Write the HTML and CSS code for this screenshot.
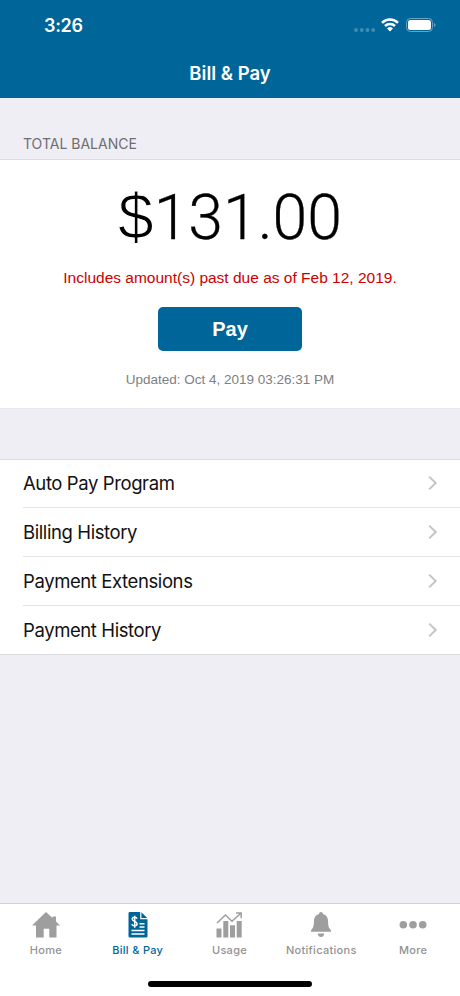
FILE: index.html
```
<!DOCTYPE html>
<html lang="en">
<head>
  <meta charset="UTF-8">
  <title>Bill &amp; Pay</title>
  <meta name="viewport" content="width=device-width,initial-scale=1">
  <link rel="stylesheet" href="styles.css">
</head>
<body>
<header class="top">
  <div class="status">
    <span class="time">3:26</span>
    <div class="status-icons">
      <svg class="signal" width="22" height="4" viewBox="0 0 22 4"><circle cx="2" cy="2" r="1.9"/><circle cx="7.8" cy="2" r="1.9"/><circle cx="13.5" cy="2" r="1.9"/><circle cx="19.2" cy="2" r="1.9"/></svg>
      <svg class="wifi" width="18" height="14" viewBox="0 0 18 14">
        <path d="M1 4.8a11.4 11.4 0 0 1 16 0M4 8a7.2 7.2 0 0 1 10 0" fill="none" stroke="#fff" stroke-width="2.5"/>
        <path d="M9 13.4 6 10.5a4.3 4.3 0 0 1 6 0z" fill="#fff"/>
      </svg>
      <svg class="battery" width="30" height="14" viewBox="0 0 30 14">
        <rect x=".5" y=".5" width="26" height="13" rx="4" fill="none" stroke="#67a4c5"/>
        <rect x="2" y="2" width="23" height="10" rx="2.5" fill="#fff"/>
        <path d="M28 5q1.6.6 1.6 2T28 9z" fill="#67a4c5"/>
      </svg>
    </div>
  </div>
  <h1>Bill &amp; Pay</h1>
</header>

<main>
  <h2>TOTAL BALANCE</h2>
  <section class="balance">
    <div class="amount"><span class="currency">$</span>131.00</div>
    <p class="due">Includes amount(s) past due as of Feb 12, 2019.</p>
    <button class="pay">Pay</button>
    <p class="updated">Updated: Oct 4, 2019 03:26:31 PM</p>
  </section>

  <ul class="menu">
    <li><span>Auto Pay Program</span><svg width="10" height="16" viewBox="0 0 10 16"><path d="m1.2 1.6 6.5 6.4-6.5 6.4"/></svg></li>
    <li><span>Billing History</span><svg width="10" height="16" viewBox="0 0 10 16"><path d="m1.2 1.6 6.5 6.4-6.5 6.4"/></svg></li>
    <li><span>Payment Extensions</span><svg width="10" height="16" viewBox="0 0 10 16"><path d="m1.2 1.6 6.5 6.4-6.5 6.4"/></svg></li>
    <li><span>Payment History</span><svg width="10" height="16" viewBox="0 0 10 16"><path d="m1.2 1.6 6.5 6.4-6.5 6.4"/></svg></li>
  </ul>
</main>

<footer>
  <nav class="tabs">
    <a class="tab">
      <svg width="28" height="26" viewBox="0 0 28 26"><path d="M14 0 20.500 6V4.500H24v5l4 4.100h-3.500V25.500h-7.200v-8.800h-5.600v8.800H4V13.600H0z"/></svg>
      <span>Home</span>
    </a>
    <a class="tab active">
      <svg width="20" height="26" viewBox="0 0 20 26">
        <path d="M1.8 0h10.4v7.3h7.3v16.9q0 1.3-1.3 1.3H1.8Q.5 25.5.5 24.2V1.3Q.5 0 1.8 0zM13.4.2l5.9 5.9h-5.9z"/>
        <path class="cut" d="M9 6.6C8.2 4.8 4.3 4.8 4.3 7.2c0 2.5 4.8 1.7 4.8 4.6 0 2.7-4.5 2.6-5.3.5M6.7 3.700v12M11.500 11.800h5M11.500 15h5M3.500 18.500h13M3.500 22h13"/>
      </svg>
      <span>Bill &amp; Pay</span>
    </a>
    <a class="tab">
      <svg width="28" height="26" viewBox="0 0 28 26">
        <path d="M1.500 16.500h5v9h-5zM8.300 9h5v16.500h-5zM15 13.300h5v12.200h-5zM21.700 9h5v16.500h-5z"/>
        <path class="trend" d="m2 11 8.400-8 6.600 6.200 8.800-8M21 1h5.200v5.200"/>
      </svg>
      <span>Usage</span>
    </a>
    <a class="tab">
      <svg width="22" height="26" viewBox="0 0 22 26"><path d="M11 0c1.200 0 1.900.8 1.900 1.900 3.400.9 5.200 3.600 5.200 7.200 0 5.300.7 7 2.800 9.100.6.7.2 1.600-.8 1.600H1.900c-1 0-1.400-.9-.8-1.600 2.100-2.100 2.800-3.800 2.800-9.100 0-3.600 1.800-6.300 5.200-7.200C9.100.8 9.800 0 11 0zM7.800 21.500h6.400Q13.700 25 11 25T7.800 21.500z"/></svg>
      <span>Notifications</span>
    </a>
    <a class="tab">
      <svg width="28" height="26" viewBox="0 0 28 26"><circle cx="4.300" cy="12.700" r="3.800"/><circle cx="14" cy="12.700" r="3.800"/><circle cx="23.700" cy="12.700" r="3.800"/></svg>
      <span>More</span>
    </a>
  </nav>
  <div class="home-bar"></div>
</footer>
</body>
</html>
```
FILE: styles.css
```
:root {
  --blue: #006699;
  --bg: #efeef4;
  --line: #dcdce0;
  --gray: #9e9e9e;
  --sans: Inter, Roboto, sans-serif;
  --helv: "Liberation Sans", Arial, sans-serif;
}
* {
  box-sizing: border-box;
}
body {
  display: flex;
  flex-direction: column;
  height: 996px;
  margin: 0;
  background: var(--bg);
  font-family: var(--sans);
  overflow: hidden;
}
h1, h2, p, ul {
  margin: 0;
  padding: 0;
  font-weight: 400;
}
svg {
  display: block;
}
.top {
  height: 98px;
  background: var(--blue);
  color: #fff;
}
.status {
  display: flex;
  justify-content: space-between;
  height: 50px;
  padding: 15px 24px 0 44px;
}
.time {
  font-size: 18px;
  line-height: 22px;
  font-weight: 600;
  letter-spacing: -.3px;
}
.status-icons {
  display: flex;
  align-items: flex-start;
  padding-top: 3px;
}
.signal {
  margin: 10px 5px 0 0;
  fill: #3f8db5;
}
.wifi {
  margin-right: 7px;
}
h1 {
  font-size: 18.5px;
  line-height: 24px;
  padding-top: 11px;
  font-weight: 600;
  text-align: center;
}
main {
  flex: 1;
}
h2 {
  height: 61px;
  padding: 37px 23px 0;
  font-size: 14px;
  line-height: 18px;
  color: #6d6d72;
}
.balance {
  display: flex;
  flex-direction: column;
  align-items: center;
  height: 250px;
  background: #fff;
  border-top: 1px solid var(--line);
  border-bottom: 1px solid #e8e8ec;
  font-family: var(--helv);
}
.amount {
  margin-top: 23px;
  font: 300 62.5px/70px Roboto, sans-serif;
  -webkit-text-stroke: .3px #000;
}
/* white outline thins the strokes to a light weight */
.currency {
  font-family: var(--helv);
  font-weight: 400;
  font-size: 64px;
  line-height: 1;
  -webkit-text-stroke: 1.2px #fff;
}
.due {
  margin-top: 16px;
  font-size: 15.5px;
  line-height: 18px;
  color: #c00;
}
.pay {
  width: 144px;
  height: 44px;
  margin-top: 20px;
  padding: 0;
  border: 0;
  border-radius: 5px;
  background: var(--blue);
  color: #fff;
  font: bold 20px var(--helv);
}
.updated {
  margin-top: 20px;
  font-size: 13.5px;
  line-height: 17px;
  color: #808080;
}
.menu {
  margin-top: 50px;
  padding-left: 23px;
  background: #fff;
  border-top: 1px solid var(--line);
  border-bottom: 1px solid var(--line);
  list-style: none;
}
.menu li {
  display: flex;
  align-items: center;
  justify-content: space-between;
  height: 49px;
  padding-right: 22px;
  border-bottom: 1px solid #e3e3e6;
  font-size: 18.5px;
  letter-spacing: -.4px;
  color: #111;
}
.menu li:first-child {
  height: 48px;
  padding-bottom: 1px;
}
.menu li:last-child {
  height: 48px;
  border-bottom: 0;
}
.menu path {
  fill: none;
  stroke: #c4c4c8;
  stroke-width: 2;
}
footer {
  height: 93px;
  background: #fff;
  border-top: 1px solid #d2d2d5;
}
.tabs {
  display: grid;
  grid-template-columns: repeat(5, 1fr);
  height: 77px;
  padding: 8px 1px 0 0;
}
.tab {
  display: flex;
  flex-direction: column;
  align-items: center;
  fill: var(--gray);
  color: #929292;
  font-size: 11px;
  font-weight: 500;
  line-height: 14px;
  letter-spacing: .3px;
}
.tab span {
  margin-top: 5px;
}
.active {
  color: var(--blue);
  fill: var(--blue);
}
.cut {
  fill: none;
  stroke: #fff;
  stroke-width: 1.5;
}
.trend {
  fill: none;
  stroke: var(--gray);
  stroke-width: 1.5;
}
.home-bar {
  width: 164px;
  height: 6px;
  margin: 0 auto;
  border-radius: 3px;
  background: #000;
}
```
